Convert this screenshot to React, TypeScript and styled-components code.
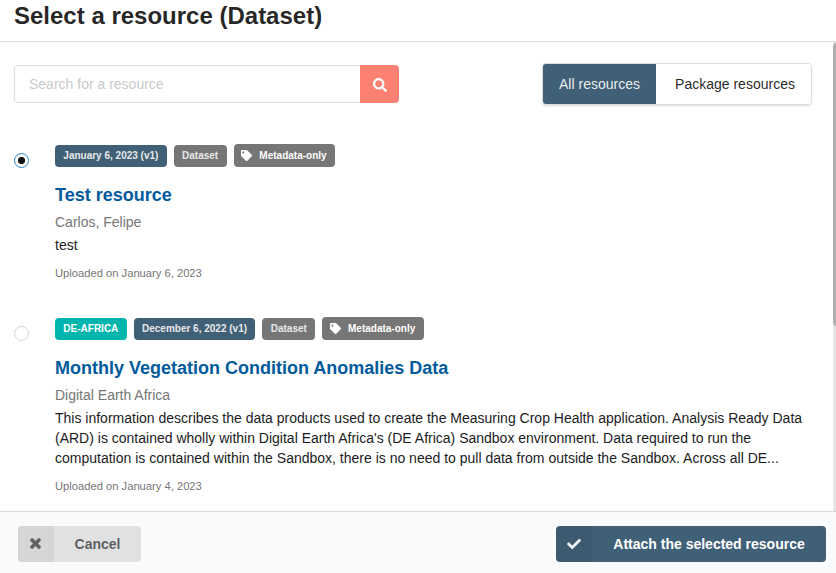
import React, { useState } from "react";
import styled, { createGlobalStyle, css } from "styled-components";
import { FaCheck, FaSearch, FaTag } from "react-icons/fa";

const GlobalStyle = createGlobalStyle`
  *, *::before, *::after { box-sizing: border-box; }
  body {
    margin: 0;
    background: #fff;
    color: rgba(0, 0, 0, 0.87);
    font: 14px/20px "Liberation Sans", Arial, sans-serif;
  }
`;

const Dialog = styled.div`
  display: flex;
  flex-direction: column;
  height: 573px;
  overflow: hidden;
`;

const Header = styled.header`
  flex: 0 0 42px;
  padding-left: 14px;
  border-bottom: 1px solid rgba(34, 36, 38, 0.15);
`;

const Title = styled.h1`
  margin: 0;
  font-size: 24px;
  line-height: 31px;
  font-weight: 700;
`;

const Content = styled.main`
  flex: 1;
  min-height: 0;
  display: flex;
`;

const Scroller = styled.div`
  flex: 1;
  min-width: 0;
  overflow: hidden;
  padding: 21px 21px 0 14px;
`;

const ScrollTrack = styled.div`
  flex: 0 0 3px;
  overflow: hidden;
  background: #e6e6e6;
`;

const ScrollThumb = styled.div`
  width: 10px;
  height: 285px;
  border-radius: 5px;
  background: #acadad;
`;

const Toolbar = styled.div`
  display: flex;
  justify-content: space-between;
  align-items: center;
  height: 42px;
`;

const SearchBox = styled.form`
  display: flex;
  width: 385px;
  height: 38px;
`;

const SearchInput = styled.input`
  flex: 1;
  min-width: 0;
  padding: 0 14px;
  border: 1px solid rgba(34, 36, 38, 0.15);
  border-right: 0;
  border-radius: 4px 0 0 4px;
  outline: 0;
  color: inherit;
  font: inherit;
  &::placeholder { color: rgba(191, 191, 191, 0.87); }
`;

const SearchButton = styled.button`
  display: flex;
  align-items: center;
  justify-content: center;
  width: 39px;
  padding: 2px 0 0;
  border: 0;
  border-radius: 0 4px 4px 0;
  background: #fc8172;
  color: #fff;
  font-size: 14px;
`;

const Tabs = styled.div`
  display: flex;
  width: 270px;
  height: 42px;
  border: 1px solid rgba(34, 36, 38, 0.15);
  border-radius: 4px;
  box-shadow: 0 1px 2px 0 rgba(34, 36, 38, 0.15);
  overflow: hidden;
`;

const Tab = styled.button<{ $active: boolean }>`
  flex: ${({ $active }) => ($active ? "0 0 113px" : "1")};
  padding: 0 0 0 ${({ $active }) => ($active ? "0" : "3px")};
  border: 0;
  background: ${({ $active }) => ($active ? "#406077" : "#fff")};
  color: ${({ $active }) => ($active ? "rgba(255,255,255,.9)" : "rgba(0,0,0,.87)")};
  font: inherit;
`;

const List = styled.div`
  display: flex;
  flex-direction: column;
  gap: 34px;
  margin-top: 39px;
`;

const Item = styled.article`
  display: flex;
  height: 139px;
`;

const RadioCell = styled.label`
  flex: 0 0 41px;
  padding-top: 9px;
`;

const Radio = styled.input`
  appearance: none;
  display: block;
  width: 15px;
  height: 15px;
  margin: 0;
  border: 1px solid #d4d4d5;
  border-radius: 50%;
  background: #fff;
  &:checked {
    border-color: #2185d0;
    background: radial-gradient(circle, #101112 3.2px, transparent 4px);
  }
`;

const Body = styled.div`
  flex: 1;
  min-width: 0;
`;

const Labels = styled.div`
  display: flex;
  align-items: flex-end;
  gap: 7px;
  height: 23px;
`;

type Tone = "primary" | "neutral" | "teal";
const tones: Record<Tone, string> = {
  primary: "#406077",
  neutral: "#767676",
  teal: "#00b5ad",
};

const Label = styled.span<{ $tone: Tone; $icon?: boolean }>`
  display: flex;
  align-items: center;
  height: 22px;
  padding: 0 8.33px;
  border-radius: 4px;
  background: ${({ $tone }) => tones[$tone]};
  color: ${({ $tone }) => ($tone === "teal" ? "#fff" : "#e8e8e8")};
  font-size: 10px;
  line-height: 10px;
  font-weight: 700;
  white-space: nowrap;
  ${({ $icon }) => $icon && css`
    height: 23px;
    color: #fff;
    svg { width: 11px; height: 11px; margin: 0 7px 1px -0.5px; }
  `}
`;

const ItemTitle = styled.h2`
  margin: 16px 0 0;
  color: #005a9c;
  font-size: 18px;
  line-height: 24px;
  font-weight: 700;
`;

const Creator = styled.div`
  margin-top: 5px;
  color: #767676;
`;

const Description = styled.p`
  margin: 3px 0 0;
  color: #1b1c1d;
`;

const Uploaded = styled.div`
  margin-top: 10px;
  color: #767676;
  font-size: 11.2px;
  line-height: 16px;
`;

const Footer = styled.footer`
  flex: 0 0 62px;
  display: flex;
  justify-content: space-between;
  align-items: flex-start;
  padding: 14px 10px 0 18px;
  border-top: 1px solid rgba(34, 36, 38, 0.15);
  background: #f9fafb;
`;

const Action = styled.button<{ $primary?: boolean }>`
  display: flex;
  width: ${({ $primary }) => ($primary ? "270px" : "123px")};
  height: 36px;
  padding: 0;
  border: 0;
  border-radius: 4px;
  overflow: hidden;
  background: ${({ $primary }) => ($primary ? "#406077" : "#e0e1e2")};
  color: ${({ $primary }) => ($primary ? "#fff" : "rgba(0,0,0,.6)")};
  font: 700 14px/36px "Liberation Sans", Arial, sans-serif;
`;

const ActionIcon = styled.span`
  display: flex;
  flex: 0 0 36px;
  height: 36px;
  align-items: center;
  justify-content: center;
  background: rgba(0, 0, 0, 0.05);
  opacity: 0.9;
`;

const ActionText = styled.span`
  flex: 1;
`;

const Cross = styled.svg`
  width: 11px;
  height: 11px;
  margin: 0 1px 1px 0;
`;

const CrossIcon = () => (
  <Cross viewBox="110 366 1188 1188" fill="currentColor">
    <path d="M1298 1322q0 40-28 68l-136 136q-28 28-68 28t-68-28l-294-294-294 294q-28 28-68 28t-68-28l-136-136q-28-28-28-68t28-68l294-294-294-294q-28-28-28-68t28-68l136-136q28-28 68-28t68 28l294 294 294-294q28-28 68-28t68 28l136 136q28 28 28 68t-28 68l-294 294 294 294q28 28 28 68z" />
  </Cross>
);

interface Resource {
  id: string;
  community?: string;
  version: string;
  title: string;
  creator: string;
  description: string;
  uploaded: string;
}

const resources: Resource[] = [
  {
    id: "test",
    version: "January 6, 2023 (v1)",
    title: "Test resource",
    creator: "Carlos, Felipe",
    description: "test",
    uploaded: "January 6, 2023",
  },
  {
    id: "vegetation",
    community: "DE-AFRICA",
    version: "December 6, 2022 (v1)",
    title: "Monthly Vegetation Condition Anomalies Data",
    creator: "Digital Earth Africa",
    description:
      "This information describes the data products used to create the Measuring Crop Health application. Analysis Ready Data (ARD) is contained wholly within Digital Earth Africa's (DE Africa) Sandbox environment. Data required to run the computation is contained within the Sandbox, there is no need to pull data from outside the Sandbox. Across all DE...",
    uploaded: "January 4, 2023",
  },
];

export default function App() {
  const [selected, setSelected] = useState("test");
  return (
    <>
      <GlobalStyle />
      <Dialog>
        <Header>
          <Title>Select a resource (Dataset)</Title>
        </Header>
        <Content>
          <Scroller>
            <Toolbar>
              <SearchBox onSubmit={(e) => e.preventDefault()}>
                <SearchInput placeholder="Search for a resource" />
                <SearchButton aria-label="Search"><FaSearch /></SearchButton>
              </SearchBox>
              <Tabs>
                <Tab $active>All resources</Tab>
                <Tab $active={false}>Package resources</Tab>
              </Tabs>
            </Toolbar>
            <List>
              {resources.map((r) => (
                <Item key={r.id}>
                  <RadioCell>
                    <Radio
                      type="radio"
                      name="resource"
                      aria-label={r.title}
                      checked={selected === r.id}
                      onChange={() => setSelected(r.id)}
                    />
                  </RadioCell>
                  <Body>
                    <Labels>
                      {r.community && <Label $tone="teal">{r.community}</Label>}
                      <Label $tone="primary">{r.version}</Label>
                      <Label $tone="neutral">Dataset</Label>
                      <Label $tone="neutral" $icon><FaTag />Metadata-only</Label>
                    </Labels>
                    <ItemTitle>{r.title}</ItemTitle>
                    <Creator>{r.creator}</Creator>
                    <Description>{r.description}</Description>
                    <Uploaded>Uploaded on {r.uploaded}</Uploaded>
                  </Body>
                </Item>
              ))}
            </List>
          </Scroller>
          <ScrollTrack><ScrollThumb /></ScrollTrack>
        </Content>
        <Footer>
          <Action>
            <ActionIcon><CrossIcon /></ActionIcon>
            <ActionText>Cancel</ActionText>
          </Action>
          <Action $primary>
            <ActionIcon><FaCheck /></ActionIcon>
            <ActionText>Attach the selected resource</ActionText>
          </Action>
        </Footer>
      </Dialog>
    </>
  );
}
